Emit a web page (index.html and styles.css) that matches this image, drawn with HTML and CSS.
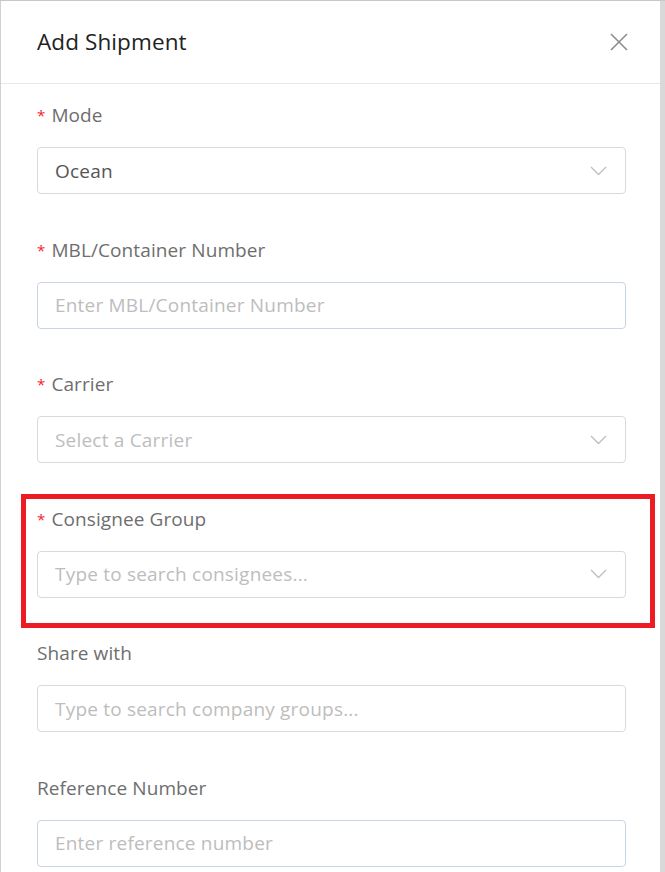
FILE: index.html
```html
<!DOCTYPE html>
<html lang="en">
<head>
<meta charset="utf-8">
<title>Add Shipment</title>
<link rel="stylesheet" href="styles.css">
</head>
<body>
<div class="page">
  <div class="modal">
    <div class="modal-header">
      <h1 class="modal-title">Add Shipment</h1>
      <button class="close-btn" aria-label="Close">
        <svg width="18" height="18" viewBox="0 0 18 18"><path d="M1 1 L17 17 M17 1 L1 17" stroke="#8c8c8c" stroke-width="1.6" fill="none"/></svg>
      </button>
    </div>
    <div class="modal-body">
      <div class="form-item">
        <label class="label"><span class="req">*</span>Mode</label>
        <div class="select"><span class="value">Ocean</span><svg class="chev" width="17" height="10" viewBox="0 0 17 10"><path d="M1 1 L8.5 8.5 L16 1" stroke="#bfbfbf" stroke-width="1.4" fill="none"/></svg></div>
      </div>
      <div class="form-item">
        <label class="label"><span class="req">*</span>MBL/Container Number</label>
        <div class="input"><span class="placeholder">Enter MBL/Container Number</span></div>
      </div>
      <div class="form-item">
        <label class="label"><span class="req">*</span>Carrier</label>
        <div class="select"><span class="placeholder">Select a Carrier</span><svg class="chev" width="17" height="10" viewBox="0 0 17 10"><path d="M1 1 L8.5 8.5 L16 1" stroke="#bfbfbf" stroke-width="1.4" fill="none"/></svg></div>
      </div>
      <div class="form-item highlighted">
        <label class="label"><span class="req">*</span>Consignee Group</label>
        <div class="select"><span class="placeholder">Type to search consignees...</span><svg class="chev" width="17" height="10" viewBox="0 0 17 10"><path d="M1 1 L8.5 8.5 L16 1" stroke="#bfbfbf" stroke-width="1.4" fill="none"/></svg></div>
      </div>
      <div class="form-item">
        <label class="label">Share with</label>
        <div class="select plain"><span class="placeholder">Type to search company groups...</span></div>
      </div>
      <div class="form-item">
        <label class="label">Reference Number</label>
        <div class="input"><span class="placeholder">Enter reference number</span></div>
      </div>
    </div>
  </div>
  <div class="backdrop-strip"></div>
</div>
</body>
</html>
```

FILE: styles.css
```css
html, body {
  margin: 0;
  padding: 0;
  height: 100%;
  overflow: hidden;
}
body {
  background: #dcdcdc;
  font-family: "Open Sans", "Liberation Sans", sans-serif;
}
.page {
  display: flex;
  height: 872px;
  box-sizing: border-box;
  border-top: 1px solid #c8c8c8;
}
.modal {
  width: 660px;
  flex: none;
  background: #fff;
  border-left: 1px solid #d0d0d0;
  box-sizing: border-box;
}
.backdrop-strip {
  flex: 1;
  background: #d9d9d9;
}
.modal-header {
  height: 82px;
  display: flex;
  align-items: center;
  justify-content: space-between;
  padding: 0 32px 0 36px;
  border-bottom: 1px solid #e8e8e8;
}
.modal-title {
  margin: 0;
  font-size: 22.5px;
  font-weight: 400;
  color: #222;
  letter-spacing: 0.1px;
  padding-bottom: 2px;
}
.close-btn {
  border: 0;
  background: none;
  padding: 0;
  width: 18px;
  height: 18px;
  display: flex;
}
.modal-body {
  padding: 20px 34px 0 36px;
}
.form-item {
  margin-bottom: 44.5px;
}
.form-item.highlighted {
  position: relative;
}
.form-item.highlighted::after {
  content: "";
  position: absolute;
  left: -16px;
  right: -29px;
  top: -14px;
  bottom: -30px;
  border: 5px solid #ed1c24;
  pointer-events: none;
}
.label {
  display: block;
  height: 22px;
  line-height: 22px;
  font-size: 19px;
  color: #6e6e6e;
  margin-bottom: 21px;
  white-space: nowrap;
  letter-spacing: 0.1px;
}
.req {
  color: #f5222d;
  font-size: 15px;
  margin-right: 6px;
  vertical-align: 1px;
}
.select, .input {
  height: 47px;
  box-sizing: border-box;
  border: 1px solid #d9d9d9;
  border-radius: 4px;
  display: flex;
  align-items: center;
  justify-content: space-between;
  padding: 0 18px 0 17px;
  font-size: 19px;
  letter-spacing: 0.2px;
}
.input {
  border-color: #c9d4e2;
}
.value {
  color: #555;
}
.placeholder {
  color: #bdbdbd;
}
.chev {
  flex: none;
}
```
